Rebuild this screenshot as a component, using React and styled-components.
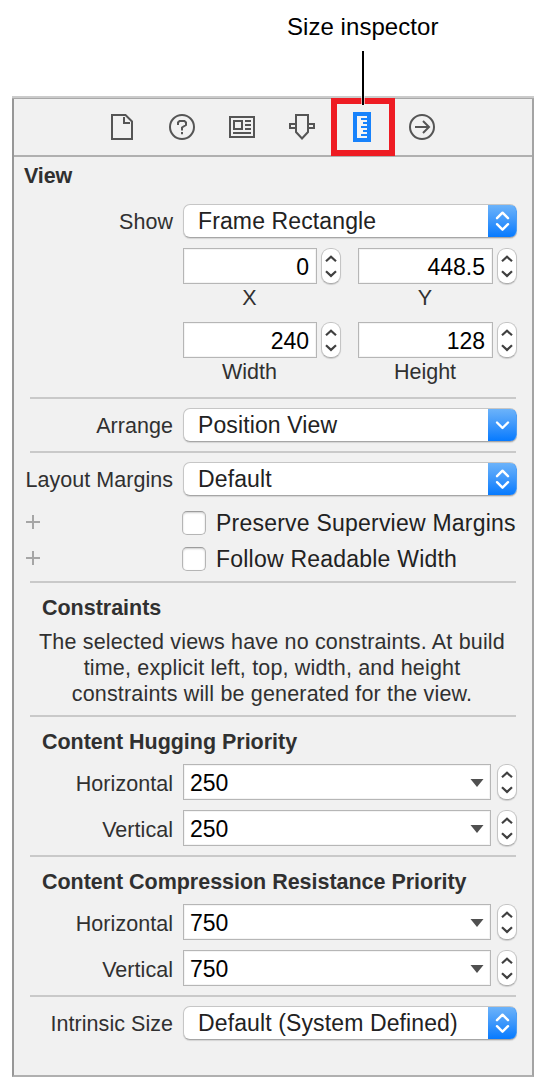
import React from "react";
import styled, { createGlobalStyle } from "styled-components";

const GlobalStyle = createGlobalStyle`
  * { box-sizing: border-box; }
  body { margin: 0; background: #fff; }
`;

const Page = styled.div`
  width: 546px;
  height: 1089px;
  background: #fff;
  font-family: "Liberation Sans", Arial, sans-serif;
  color: #303030;
`;

const Callout = styled.div`
  height: 96px;
  padding: 13px 0 0 287px;
  font-size: 24px;
  line-height: 27px;
  letter-spacing: 0.05px;
  color: #000;
  white-space: nowrap;
`;

const Panel = styled.section`
  width: 522px;
  height: 981px;
  margin-left: 12px;
  display: flex;
  flex-direction: column;
  background: #f1f1f1;
  border-left: 2px solid #979797;
  border-right: 2px solid #a4a4a4;
  border-bottom: 2px solid #b0b0b0;
`;

const TopEdge = styled.div`
  height: 3px;
  flex: none;
  margin: 0 -2px;
  background: #cbcbcb;
  border-bottom: 1px solid #a8a8a8;
`;

const Toolbar = styled.nav`
  height: 58px;
  flex: none;
  display: flex;
  padding-left: 78px;
  border-bottom: 2px solid #b0b0b0;
`;

const Tool = styled.button`
  position: relative;
  width: 60px;
  height: 56px;
  padding: 0;
  border: 0;
  background: none;
  display: flex;
  align-items: center;
  justify-content: center;
`;

const Highlight = styled.span`
  position: absolute;
  left: -1px;
  top: -1px;
  width: 64px;
  height: 58px;
  border: 6px solid #ee1c23;
`;

const Leader = styled.span`
  position: absolute;
  left: 30px;
  top: -48px;
  width: 2px;
  height: 54px;
  background: #000;
  box-shadow: 1px 0 0 rgba(255, 255, 255, 0.6), -1px 0 0 rgba(255, 255, 255, 0.6);
`;

const ViewTitle = styled.h2`
  margin: 0 0 0 10px;
  height: 44px;
  padding-top: 6px;
  font-size: 21.5px;
  line-height: 26px;
  letter-spacing: -0.1px;
`;

const Rule = styled.hr`
  width: 486px;
  height: 2px;
  flex: none;
  margin: 0 0 0 16px;
  border: 0;
  background: #c9c9c9;
`;

const Section = styled.div`
  padding: ${(p) => p.$pad || "9px 0"};
`;

const Row = styled.div`
  display: flex;
  height: ${(p) => p.$h || 34}px;
  margin-bottom: ${(p) => p.$mb || 0}px;
`;

const Label = styled.label`
  width: 159px;
  flex: none;
  margin-right: 10px;
  padding-top: ${(p) => p.$drop || 1}px;
  text-align: right;
  font-size: 21.5px;
  line-height: 34px;
  letter-spacing: 0.04px;
  white-space: nowrap;
`;

const Popup = styled.div`
  width: 334px;
  height: 34px;
  display: flex;
  justify-content: space-between;
  overflow: hidden;
  padding-left: 14px;
  border: 1px solid #c6c6c6;
  border-bottom-color: #a6a6a6;
  border-right: 0;
  border-radius: 7px;
  background: #fff;
  box-shadow: 0 1px 1px rgba(0, 0, 0, 0.12);
  font-size: 23px;
  line-height: 33px;
  letter-spacing: 0.12px;
  color: #222;
  white-space: nowrap;
`;

const PopupCap = styled.span`
  width: 29px;
  height: 34px;
  flex: none;
  margin-top: -1px;
  display: flex;
  align-items: center;
  justify-content: center;
  background: linear-gradient(#6cb3fa, #3d97fb 50%, #067aff);
  border: 1px solid #4c9df5;
  border-left: 0;
  border-bottom-color: #0a66e8;
  border-radius: 0 7px 7px 0;
`;

const Pair = styled.div`
  display: flex;
  gap: ${(p) => p.$gap || 4}px;
`;

const Pairs = styled.div`
  display: flex;
  gap: 17px;
  margin: 0 0 0 169px;
`;

const Field = styled.div`
  width: ${(p) => p.$w}px;
  height: 36px;
  flex: none;
  display: flex;
  align-items: center;
  justify-content: ${(p) => (p.$combo ? "space-between" : "flex-end")};
  padding: ${(p) => (p.$combo ? "1px 6px 0 6px" : "1px 7px 0 0")};
  border: 1px solid #b6b6b6;
  background: #fff;
  box-shadow: inset 0 0 0 1px #f4f4f4;
  font-size: 23px;
  line-height: 34px;
  color: #000;
`;

const Caption = styled.div`
  width: ${(p) => p.$w}px;
  height: 38px;
  padding: 1px 1px 0 0;
  font-size: 21.5px;
  line-height: 27px;
  text-align: center;
`;

const StepperBox = styled.span`
  width: 20px;
  height: 36px;
  flex: none;
  display: flex;
  align-items: center;
  justify-content: center;
  border: 1px solid #c4c4c4;
  border-bottom-color: #adadad;
  border-radius: 9px;
  background: #fff;
  box-shadow: 0 1px 1px rgba(0, 0, 0, 0.14);
`;

const CheckRow = styled.div`
  display: flex;
  align-items: center;
  height: 24px;
  padding-left: 12px;
  margin-bottom: ${(p) => p.$mb || 0}px;
  font-size: 23px;
  line-height: 24px;
  letter-spacing: 0.22px;
  color: #222;
  white-space: nowrap;
`;

const PlusIcon = styled.svg`
  flex: none;
  margin: 0 142px 2px 0;
`;

const Box = styled.span`
  width: 24px;
  height: 24px;
  flex: none;
  margin-right: 10px;
  border: 1px solid #b5b5b5;
  border-top-color: #9d9d9d;
  border-radius: 5px;
  background: #fff;
  box-shadow: inset 0 1px 2px rgba(0, 0, 0, 0.2);
`;

const Heading = styled.h3`
  margin: 0 0 0 28px;
  font-size: 21.5px;
  line-height: 26px;
  letter-spacing: -0.02px;
  white-space: nowrap;
`;

const Note = styled.p`
  margin: 8px 0 0;
  padding-right: 2px;
  width: 518px;
  text-align: center;
  font-size: 21.5px;
  line-height: 26px;
  letter-spacing: 0.17px;
  white-space: nowrap;
`;

const Stepper = () => (
  <StepperBox>
    <svg width="18" height="34" fill="none" stroke="#404040" strokeWidth="2.2">
      <path d="M4 12.3 9 7.7l5 4.6M4 22.3l5 4.6 5-4.6" />
    </svg>
  </StepperBox>
);

const Select = ({ children, single }) => (
  <Popup>
    <span>{children}</span>
    <PopupCap>
      <svg width="28" height="32" fill="none" stroke="#fff" strokeWidth="2.4" strokeLinecap="round" strokeLinejoin="round">
        {single ? <path d="M9 13.5l5.5 5.5 5.5-5.5" /> : <path d="M9 13.2 14.5 7.7l5.5 5.5M9 19.2l5.5 5.5 5.5-5.5" />}
      </svg>
    </PopupCap>
  </Popup>
);

const NumberPair = ({ w, value, caption }) => (
  <div>
    <Pair>
      <Field $w={w}>{value}</Field>
      <Stepper />
    </Pair>
    <Caption $w={w}>{caption}</Caption>
  </div>
);

const PriorityRow = ({ label, value, mb }) => (
  <Row $h={36} $mb={mb}>
    <Label $drop={3}>{label}</Label>
    <Pair $gap={6}>
      <Field $w={308} $combo>
        {value}
        <svg width="14" height="8">
          <path d="M.5 0h13L7 8z" fill="#505050" />
        </svg>
      </Field>
      <Stepper />
    </Pair>
  </Row>
);

const CheckItem = ({ children, mb }) => (
  <CheckRow $mb={mb}>
    <PlusIcon width="14" height="14">
      <path d="M0 7h14M7 0v14" stroke="#a6a6a6" strokeWidth="2" />
    </PlusIcon>
    <Box />
    <span>{children}</span>
  </CheckRow>
);

const icon = { fill: "none", stroke: "#555", strokeWidth: 2 };

export default function App() {
  return (
    <Page>
      <GlobalStyle />
      <Callout>Size inspector</Callout>
      <Panel>
        <TopEdge />
        <Toolbar>
          <Tool aria-label="File">
            <svg width="26" height="26" {...icon}>
              <path d="M3 1h13.5L23 7.5V25H3zM15 3v6h6" />
            </svg>
          </Tool>
          <Tool aria-label="Help">
            <svg width="26" height="26" {...icon}>
              <circle cx="13" cy="13" r="12" />
              <path d="M9 11V8.5L10.5 7H15.5L17 8.5V11L13 13.5V16.5M13 18v2.2" />
            </svg>
          </Tool>
          <Tool aria-label="Identity">
            <svg width="26" height="26" {...icon}>
              <path d="M1 3h24v20H1zM5 7h8v8H5zM16 7h6M16 11h6M16 15h6M4 19h18" />
            </svg>
          </Tool>
          <Tool aria-label="Attributes">
            <svg width="26" height="26" {...icon}>
              <path d="M7 1h12v17l-6 6.5L7 18zM7 10H1v4h6M19 10h6v4h-6" />
            </svg>
          </Tool>
          <Tool aria-label="Size">
            <svg width="18" height="30">
              <path d="M0 0h18v30H0z" fill="#1782fb" />
              <path d="M4 4h10v22H4z" fill="#f4f4f4" />
              <path d="M8 7h6M10 11h4M8 15h6M10 19h4M8 23h6" stroke="#1782fb" strokeWidth="2" />
            </svg>
            <Highlight />
            <Leader />
          </Tool>
          <Tool aria-label="Connections">
            <svg width="26" height="26" {...icon}>
              <circle cx="13" cy="13" r="12" />
              <path d="M6 13h13M14 7l6 6-6 6" />
            </svg>
          </Tool>
        </Toolbar>
        <ViewTitle>View</ViewTitle>
        <Section $pad="3px 0 1px">
          <Row $mb={10}>
            <Label>Show</Label>
            <Select>Frame Rectangle</Select>
          </Row>
          <Pairs>
            <NumberPair w={134} value="0" caption="X" />
            <NumberPair w={135} value="448.5" caption="Y" />
          </Pairs>
          <Pairs>
            <NumberPair w={134} value="240" caption="Width" />
            <NumberPair w={135} value="128" caption="Height" />
          </Pairs>
        </Section>
        <Rule />
        <Section>
          <Row>
            <Label>Arrange</Label>
            <Select single>Position View</Select>
          </Row>
        </Section>
        <Rule />
        <Section $pad="9px 0 10px">
          <Row $mb={15}>
            <Label>Layout Margins</Label>
            <Select>Default</Select>
          </Row>
          <CheckItem mb={12}>Preserve Superview Margins</CheckItem>
          <CheckItem>Follow Readable Width</CheckItem>
        </Section>
        <Rule />
        <Section $pad="12px 0 8px">
          <Heading>Constraints</Heading>
          <Note>
            The selected views have no constraints. At build
            <br />
            time, explicit left, top, width, and height
            <br />
            constraints will be generated for the view.
          </Note>
        </Section>
        <Rule />
        <Section $pad="12px 0 9px">
          <Heading>Content Hugging Priority</Heading>
          <Section $pad="9px 0 0">
            <PriorityRow label="Horizontal" value="250" mb={10} />
            <PriorityRow label="Vertical" value="250" />
          </Section>
        </Section>
        <Rule />
        <Section $pad="12px 0 9px">
          <Heading>Content Compression Resistance Priority</Heading>
          <Section $pad="9px 0 0">
            <PriorityRow label="Horizontal" value="750" mb={10} />
            <PriorityRow label="Vertical" value="750" />
          </Section>
        </Section>
        <Rule />
        <Section>
          <Row>
            <Label>Intrinsic Size</Label>
            <Select>Default (System Defined)</Select>
          </Row>
        </Section>
      </Panel>
    </Page>
  );
}
